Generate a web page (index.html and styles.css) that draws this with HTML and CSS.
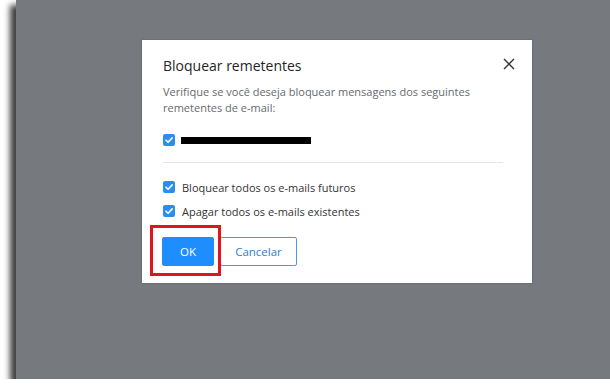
FILE: index.html
```html
<!DOCTYPE html>
<html lang="pt">
<head>
<meta charset="utf-8">
<title>Bloquear remetentes</title>
<link rel="stylesheet" href="styles.css">
</head>
<body>
<div class="screen">
  <div class="dialog">
    <div class="head">
      <h2 class="title">Bloquear remetentes</h2>
      <button class="close" aria-label="Fechar">
        <svg width="12" height="12" viewBox="0 0 12 12"><path d="M1 1L11 11M11 1L1 11" stroke="#333" stroke-width="1.4" fill="none"/></svg>
      </button>
    </div>
    <p class="desc">Verifique se você deseja bloquear mensagens dos seguintes<br>remetentes de e-mail:</p>
    <div class="row first">
      <span class="cb"><svg width="12" height="12" viewBox="0 0 12 12"><path d="M3 6.2L5.1 8.3L9.2 3.9" stroke="#fff" stroke-width="1.6" fill="none" stroke-linecap="round" stroke-linejoin="round"/></svg></span>
      <span class="redact"></span>
    </div>
    <div class="divider"></div>
    <div class="row">
      <span class="cb"><svg width="12" height="12" viewBox="0 0 12 12"><path d="M3 6.2L5.1 8.3L9.2 3.9" stroke="#fff" stroke-width="1.6" fill="none" stroke-linecap="round" stroke-linejoin="round"/></svg></span>
      <span class="label">Bloquear todos os e-mails futuros</span>
    </div>
    <div class="row second">
      <span class="cb"><svg width="12" height="12" viewBox="0 0 12 12"><path d="M3 6.2L5.1 8.3L9.2 3.9" stroke="#fff" stroke-width="1.6" fill="none" stroke-linecap="round" stroke-linejoin="round"/></svg></span>
      <span class="label">Apagar todos os e-mails existentes</span>
    </div>
    <div class="actions">
      <span class="mark"></span>
      <button class="btn primary">OK</button>
      <button class="btn secondary">Cancelar</button>
    </div>
  </div>
</div>
</body>
</html>
```

FILE: styles.css
```css
html, body {
  margin: 0;
  padding: 0;
  background: #ffffff;
  overflow: hidden;
}
body {
  font-family: "Open Sans", "Noto Sans", sans-serif;
}
.screen {
  margin-left: 16px;
  height: 379px;
  background: #76797e;
  box-shadow: -5px 6px 6px 1px rgba(30, 30, 30, 0.85);
  padding: 40px 0 0 126px;
  box-sizing: border-box;
}
.dialog {
  width: 390px;
  height: 243px;
  box-sizing: border-box;
  background: #ffffff;
  padding: 16px 17px 17px 21px;
  box-shadow: 0 0 2px rgba(0, 0, 0, 0.25);
}
.head {
  display: flex;
  justify-content: space-between;
  align-items: flex-start;
}
.title {
  margin: 0;
  font-size: 14px;
  line-height: 20px;
  font-weight: 400;
  color: #252525;
}
.close {
  border: 0;
  background: none;
  padding: 0;
  margin-top: 2px;
  width: 12px;
  height: 12px;
  display: block;
}
.close svg { display: block; }
.desc {
  margin: 8px 0 0;
  font-size: 11px;
  line-height: 16px;
  color: #666a6e;
}
.row {
  display: flex;
  align-items: center;
  gap: 7px;
  height: 20px;
  margin-top: 14px;
}
.row.second { margin-top: 4px; }
.cb {
  width: 12px;
  height: 12px;
  border-radius: 2px;
  background: #2a8ef0;
  display: block;
  flex: none;
}
.cb svg { display: block; }
.redact {
  width: 130px;
  height: 7px;
  background: #000;
  margin-left: -1px;
}
.label {
  font-size: 11px;
  color: #333;
}
.divider {
  height: 1px;
  background: #e6e6e6;
  margin: 12px 12px 0 0;
}
.actions {
  position: relative;
  display: flex;
  gap: 6px;
  margin-top: 16px;
}
.btn {
  height: 29px;
  box-sizing: border-box;
  font-family: "Open Sans", "Noto Sans", sans-serif;
  font-size: 11.5px;
  border-radius: 2px;
  padding: 0;
}
.primary {
  width: 52px;
  background: #1e8eff;
  border: 1px solid #1e8eff;
  color: #ffffff;
  margin-left: -1px;
}
.secondary {
  width: 77px;
  background: #ffffff;
  border: 1px solid #4a9be6;
  color: #2b7fd0;
}
.mark {
  position: absolute;
  left: -13px;
  top: -12px;
  width: 71px;
  height: 51px;
  box-sizing: border-box;
  border: 3px solid #e0141e;
}
```
